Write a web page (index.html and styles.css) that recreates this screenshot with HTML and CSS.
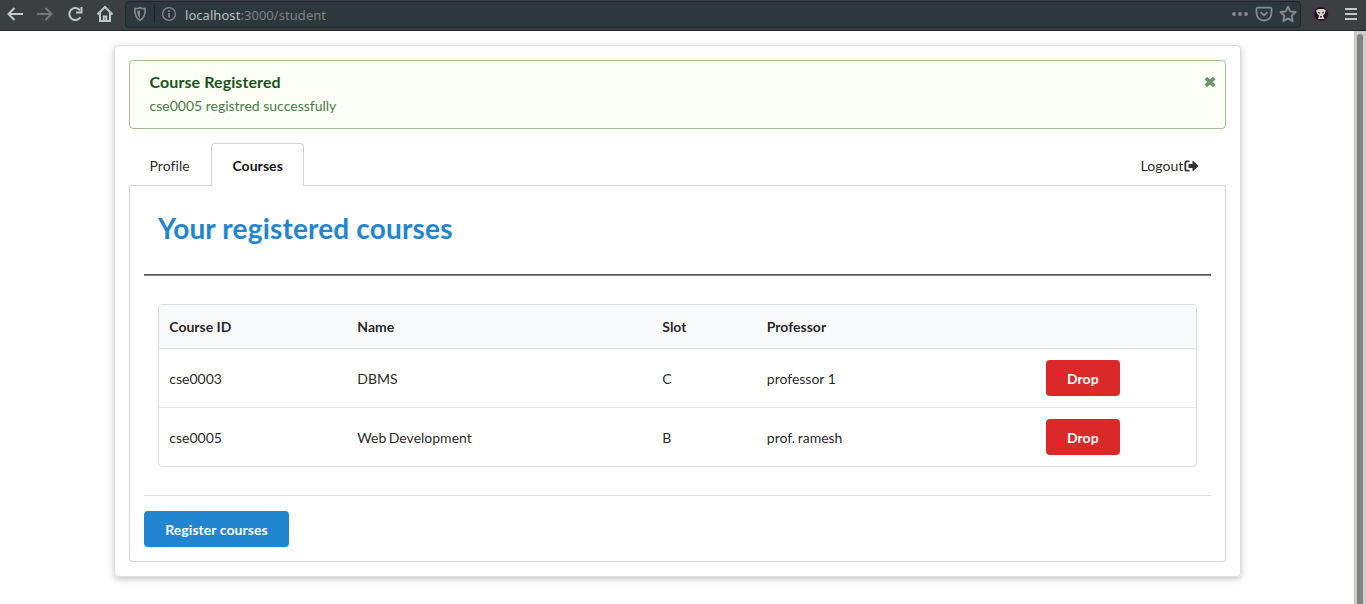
FILE: index.html
```html
<!DOCTYPE html>
<html lang="en">
<head>
<meta charset="utf-8">
<title>Student courses</title>
<link rel="stylesheet" href="styles.css">
</head>
<body>
<header class="toolbar">
  <nav class="nav-icons">
    <svg width="18" height="18" viewBox="0 0 18 18" class="ico"><path d="M17 9H2.500M8.500 3l-6 6 6 6"/></svg>
    <svg width="18" height="18" viewBox="0 0 18 18" class="ico dim"><path d="M1 9h14.500M9.500 3l6 6-6 6"/></svg>
    <svg width="18" height="18" viewBox="0 0 18 18" class="ico"><path d="M14.400 12.300A6 6 0 1 1 14 5.300"/><path d="M15.500 2v5.500H10"/></svg>
    <svg width="18" height="18" viewBox="0 0 18 18" class="ico"><path d="M1.500 9.500L9 2l7.500 7.500M4 8v8h10V8"/><path d="M7.700 16v-4.500h2.600V16"/></svg>
  </nav>
  <div class="urlbar">
    <svg width="16" height="16" viewBox="0 0 16 16" class="shield"><path d="M8 1.700c2 .7 3.500.9 5 .9C13.400 8 12.500 12 8 14.300 3.500 12 2.600 8 3 2.600c1.500 0 3-.2 5-.9z"/><path class="fill" d="M8 4.200v7.600C5.700 10 5.200 8 5.300 4.800 6.300 4.700 7 4.500 8 4.200z"/></svg>
    <span class="split"></span>
    <svg width="16" height="16" viewBox="0 0 16 16" class="info"><circle cx="8" cy="8" r="6.400"/><path d="M8 7v4.500M8 4.200v1.700"/></svg>
    <span class="url"><b>localhost</b>:3000/student</span>
    <span class="actions">
      <svg width="18" height="16" viewBox="0 0 18 16" class="dots"><circle cx="3" cy="8" r="1.900"/><circle cx="9" cy="8" r="1.900"/><circle cx="15" cy="8" r="1.900"/></svg>
      <svg width="18" height="16" viewBox="0 0 18 16" class="line"><path d="M2.500 1.700h13c.7 0 1 .3 1 1V7a7.500 7.500 0 0 1-15 0V2.700c0-.7.3-1 1-1z"/><path d="M5.500 6L9 9.400 12.500 6"/></svg>
      <svg width="18" height="18" viewBox="0 0 18 18" class="line"><path d="M9 1.600l2.200 4.800 5.400.6-4 3.700 1.100 5.400L9 13.400l-4.700 2.700 1.100-5.400-4-3.700 5.400-.6z"/></svg>
    </span>
  </div>
  <svg width="16" height="16" viewBox="0 0 16 16" class="avatar"><circle cx="8" cy="8" r="7.200" fill="#17161f" stroke="#612441"/><path d="M3 4.500L5.500 3h5L13 4.500l-1.500 3.800L10 9.500l1.500 3.500H5L6 9.500 4.300 8z" fill="#d8d2c6"/><path d="M5 6l2.300.5L6.300 8zM11 5.500l-2 1L10 8zM7.200 10h1.600v1.500H7.200z" fill="#17161f"/></svg>
  <svg width="14" height="14" viewBox="0 0 14 14" class="menu"><path d="M1 2h12M1 7h12M1 12h12"/></svg>
</header>
<div class="viewport">
  <main class="card">
    <section class="message">
      <div>
        <div class="message-title">Course Registered</div>
        <p class="message-text">cse0005 registred successfully</p>
      </div>
      <svg class="close" width="12" height="12" viewBox="0 0 12 12"><path d="M1.800 2.200l8.400 7.600M10.200 2.200L1.800 9.800"/></svg>
    </section>
    <nav class="tabs">
      <a class="tab">Profile</a>
      <a class="tab active">Courses</a>
      <a class="tab logout">Logout<svg width="15" height="12" viewBox="0 0 15 12"><path class="door" d="M5.500 1.300H3A1.700 1.700 0 0 0 1.300 3v6A1.700 1.700 0 0 0 3 10.700h2.500"/><path class="arrow" d="M4.500 4h4V1.300q0-1 .8-.3l4.800 4.500q.5.500 0 1L9.300 11q-.8.700-.8-.3V8h-4z"/></svg></a>
    </nav>
    <section class="panel">
      <h1 class="heading">Your registered courses</h1>
      <div class="rule"></div>
      <div class="table-area">
        <table class="courses">
          <colgroup><col class="c-id"><col class="c-name"><col class="c-slot"><col class="c-prof"><col></colgroup>
          <thead><tr><th>Course ID</th><th>Name</th><th>Slot</th><th>Professor</th><th></th></tr></thead>
          <tbody>
            <tr><td>cse0003</td><td>DBMS</td><td>C</td><td>professor 1</td><td><button class="button red">Drop</button></td></tr>
            <tr><td>cse0005</td><td>Web Development</td><td>B</td><td>prof. ramesh</td><td><button class="button red">Drop</button></td></tr>
          </tbody>
        </table>
      </div>
      <div class="footer"><button class="button blue">Register courses</button></div>
    </section>
  </main>
  <div class="scrollbar"><div class="thumb"></div></div>
</div>
</body>
</html>
```
FILE: styles.css
```css
* { box-sizing: border-box; }
body {
  margin: 0;
  height: 604px;
  overflow: hidden;
  background: #fff;
  color: rgba(0, 0, 0, .87);
  font: 14px/20px Lato, sans-serif;
}
svg { display: block; flex: none; }
.toolbar {
  display: flex;
  align-items: center;
  height: 31px;
  padding: 0 8px 2px 6px;
  background: #3b3f41;
  border-bottom: 1px solid #1d282b;
}
.nav-icons { display: flex; gap: 12px; width: 119px; }
.ico { fill: none; stroke: #bfc9c6; stroke-width: 2; }
.ico.dim { stroke: #747a7b; }
.urlbar {
  display: flex;
  align-items: center;
  width: 1176px;
  height: 27px;
  padding: 0 3px 0 6px;
  border: 1px solid #1c282c;
  border-radius: 4px;
  background: #2d383c;
}
.shield { fill: none; stroke: #868b8c; stroke-width: 1.700; }
.shield .fill { fill: #868b8c; stroke: none; }
.split { width: 1px; height: 18px; margin: 0 6px; background: #182124; }
.info { fill: none; stroke: #868b8c; stroke-width: 1.300; }
.info path { stroke-width: 1.700; }
.url {
  margin-left: 8px;
  padding-top: 2px;
  color: #7b8283;
  font: 13px/18px "Noto Sans", sans-serif;
  letter-spacing: .05px;
}
.url b { color: #b9c2c0; font-weight: 400; }
.actions { display: flex; align-items: center; gap: 6px; margin-left: auto; }
.dots { fill: #868b8c; }
.line { fill: none; stroke: #868b8c; stroke-width: 1.800; stroke-linejoin: round; }
.avatar { margin-left: 12px; }
.menu { margin-left: auto; stroke: #bfc9c6; stroke-width: 2; }

.viewport { display: flex; justify-content: space-between; height: 573px; padding-left: 114px; }
.card {
  width: 1127px;
  height: 532px;
  margin-top: 14px;
  padding: 14px;
  border: 1px solid rgba(34, 36, 38, .15);
  border-radius: 4px;
  box-shadow: 0 2px 4px 0 rgba(34, 36, 38, .12), 0 2px 10px 0 rgba(34, 36, 38, .15);
}
.message {
  display: flex;
  justify-content: space-between;
  height: 69px;
  padding: 11px 9px 0 19.500px;
  border: 1px solid #a3c293;
  border-radius: 4px;
  background: #fcfff5;
}
.message-title { color: #1a531b; font-size: 16px; font-weight: 700; line-height: 20px; letter-spacing: .09px; }
.message-text { margin: 4px 0 0; color: #2c662d; opacity: .85; line-height: 20px; }
.close { margin-top: 4px; stroke: #6c956b; stroke-width: 3.800; }
.tabs { display: flex; height: 43px; margin-top: 14px; border-bottom: 1px solid #d4d4d5; }
.tab { padding: 13px 20.500px 0; line-height: 20px; letter-spacing: .06px; }
.tab:first-child { width: 82px; }
.tab.active {
  width: 93px;
  height: 43px;
  padding: 12px 20.400px 0;
  border: 1px solid #d4d4d5;
  border-bottom: 0;
  border-radius: 4px 4px 0 0;
  background: #fff;
  color: rgba(0, 0, 0, .95);
  font-weight: 700;
}
.tab.logout { display: flex; margin-left: auto; padding-right: 27.500px; letter-spacing: .1px; }
.logout svg { margin-top: 4px; }
.door { fill: none; stroke: #333; stroke-width: 1.800; }
.arrow { fill: #333; }
.panel {
  height: 376px;
  padding: 0 14px;
  border: 1px solid #d4d4d5;
  border-top: 0;
  border-radius: 0 0 4px 4px;
}
.heading { margin: 0; padding: 24px 14px 0; height: 88px; color: #2185d0; font-size: 28px; font-weight: 700; line-height: 36px; letter-spacing: .17px; }
.rule { height: 2px; border-top: 1px solid #545253; background: #898788; }
.table-area { height: 220px; padding: 28px 14px 0; border-bottom: 1px solid #dededf; }
.courses {
  width: 1039px;
  height: 163px;
  border: 1px solid #dededf;
  border-radius: 4px;
  border-spacing: 0;
  table-layout: fixed;
  overflow: hidden;
}
.c-id { width: 188px; }
.c-name { width: 305px; }
.c-slot { width: 104.500px; }
.c-prof { width: 279px; }
.courses th, .courses td { padding: 0 10.300px; text-align: left; line-height: 20px; }
.courses th { height: 44px; background: #f9fafb; border-bottom: 1px solid #e1e2e3; }
.courses td { height: 59px; }
.courses tr:first-child td { border-bottom: 1px solid #e6e6e7; }
.courses tr:last-child td { height: 58px; word-spacing: -1px; }
.courses td:not(:last-child) { padding-top: 2px; }
.button {
  display: block;
  height: 36px;
  padding: 2px 0 0;
  border: 0;
  border-radius: 4px;
  color: #fff;
  font: 700 14px/14px Lato, sans-serif;
  letter-spacing: .06px;
}
.red { width: 74px; background: #db2828; }
.blue { width: 145px; background: #2185d0; }
.footer { padding-top: 15px; }
.scrollbar { width: 12px; height: 573px; padding: 3px 3px 0 2px; border-left: 1px solid #c3bfbc; background: #cfcdcc; overflow: hidden; }
.thumb { width: 6px; height: 580px; border-radius: 3px; background: #7f8483; }
```
